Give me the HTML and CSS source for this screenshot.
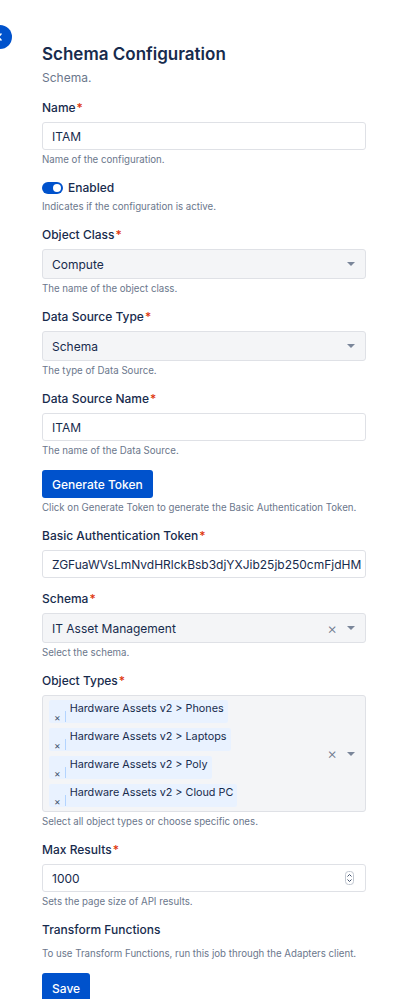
FILE: index.html
```html
<!DOCTYPE html>
<html lang="en">
<head>
  <meta charset="UTF-8">
  <title>Schema Configuration</title>
  <link rel="stylesheet" href="styles.css">
</head>
<body>

  <!-- sidebar collapse handle -->
  <button class="nav-toggle" aria-label="Collapse sidebar">
    <svg width="10" height="10" viewBox="0 0 10 10"><path d="M6 2 3 5l3 3" fill="none" stroke="#fff" stroke-width="1.6" stroke-linecap="round" stroke-linejoin="round"/></svg>
  </button>

  <form class="config">
    <div class="heading">
      <h1 class="title">Schema Configuration</h1>
      <p class="subtitle">Schema.</p>
    </div>

    <div class="field">
      <label>Name<span class="req">*</span></label>
      <div class="textbox">ITAM</div>
      <p class="help">Name of the configuration.</p>
    </div>

    <div class="field">
      <div class="toggle-row">
        <span class="toggle"><span class="knob"></span></span>
        <span class="toggle-label">Enabled</span>
      </div>
      <p class="help">Indicates if the configuration is active.</p>
    </div>

    <div class="field">
      <label>Object Class<span class="req">*</span></label>
      <div class="select">
        <span class="value">Compute</span>
        <span class="caret"></span>
      </div>
      <p class="help">The name of the object class.</p>
    </div>

    <div class="field">
      <label>Data Source Type<span class="req">*</span></label>
      <div class="select">
        <span class="value">Schema</span>
        <span class="caret"></span>
      </div>
      <p class="help">The type of Data Source.</p>
    </div>

    <div class="field">
      <label>Data Source Name<span class="req">*</span></label>
      <div class="textbox">ITAM</div>
      <p class="help">The name of the Data Source.</p>
    </div>

    <div class="field spaced">
      <button type="button" class="btn">Generate Token</button>
      <p class="help">Click on Generate Token to generate the Basic Authentication Token.</p>
    </div>

    <div class="field">
      <label>Basic Authentication Token<span class="req">*</span></label>
      <div class="textbox">ZGFuaWVsLmNvdHRlckBsb3djYXJib25jb250cmFjdHM</div>
    </div>

    <div class="field">
      <label>Schema<span class="req">*</span></label>
      <div class="select">
        <span class="value">IT Asset Management</span>
        <span class="clear">&times;</span>
        <span class="caret"></span>
      </div>
      <p class="help">Select the schema.</p>
    </div>

    <div class="field">
      <label>Object Types<span class="req">*</span></label>
      <div class="select multi">
        <div class="chips">
          <span class="chip"><span class="chip-x">&times;</span><span class="chip-text">Hardware Assets v2 &gt; Phones</span></span>
          <span class="chip"><span class="chip-x">&times;</span><span class="chip-text">Hardware Assets v2 &gt; Laptops</span></span>
          <span class="chip"><span class="chip-x">&times;</span><span class="chip-text">Hardware Assets v2 &gt; Poly</span></span>
          <span class="chip"><span class="chip-x">&times;</span><span class="chip-text">Hardware Assets v2 &gt; Cloud PC</span></span>
        </div>
        <span class="clear">&times;</span>
        <span class="caret"></span>
      </div>
      <p class="help">Select all object types or choose specific ones.</p>
    </div>

    <div class="field">
      <label>Max Results<span class="req">*</span></label>
      <div class="textbox">
        <span class="value">1000</span>
        <svg class="spinner" width="9" height="14" viewBox="0 0 9 14">
          <rect x="0.5" y="0.5" width="8" height="13" rx="3" fill="#fff" stroke="#c1c7d0"/>
          <path d="M2.5 5.5 4.5 3.5l2 2M2.5 8.5l2 2 2-2" fill="none" stroke="#42526e" stroke-width="1"/>
        </svg>
      </div>
      <p class="help">Sets the page size of API results.</p>
    </div>

    <div class="field">
      <h2 class="section">Transform Functions</h2>
      <p class="help note">To use Transform Functions, run this job through the Adapters client.</p>
    </div>

    <div class="field spaced">
      <button type="button" class="btn save">Save</button>
    </div>
  </form>

</body>
</html>
```

FILE: styles.css
```css
* {
  margin: 0;
  padding: 0;
  box-sizing: border-box;
}

body {
  background: #fff;
  color: #172b4d;
  font-family: Inter, "Noto Sans", sans-serif;
  position: relative;
  overflow: hidden;
}

.nav-toggle {
  position: absolute;
  left: -12px;
  top: 25px;
  width: 24px;
  height: 24px;
  border: none;
  border-radius: 50%;
  background: #0052cc;
  display: flex;
  align-items: center;
  justify-content: center;
}

.config {
  width: 324px;
  margin-left: 42px;
  padding-top: 42px;
  display: flex;
  flex-direction: column;
  gap: 11px;
}

.title {
  font-size: 17px;
  font-weight: 600;
  line-height: 24px;
}

.subtitle {
  margin-top: 3px;
  font-size: 12px;
  line-height: 18px;
  color: #6b778c;
}

.field label {
  display: block;
  font-size: 12px;
  font-weight: 500;
  line-height: 20px;
  margin-bottom: 4px;
}

.req {
  color: #de350b;
  margin-left: 1px;
}

.textbox,
.select {
  display: flex;
  align-items: center;
  border: 1px solid #dfe1e6;
  border-radius: 3px;
  padding: 0 9px;
  font-size: 12px;
  white-space: nowrap;
  overflow: hidden;
}

.textbox {
  height: 28px;
  background: #fff;
}

.select {
  height: 30px;
  background: #f4f5f7;
}

.select .value,
.textbox .value {
  flex: 1;
}

.clear {
  color: #6b778c;
  font-size: 15px;
  font-weight: 300;
  margin-right: 10px;
}

.caret {
  width: 0;
  height: 0;
  border-left: 4px solid transparent;
  border-right: 4px solid transparent;
  border-top: 4px solid #7a869a;
  margin-right: 1px;
}

.spinner {
  margin-right: 2px;
}

.help {
  margin-top: 3px;
  font-size: 9.7px;
  line-height: 14px;
  color: #6b778c;
  white-space: nowrap;
}

.toggle-row {
  height: 19px;
  display: flex;
  align-items: center;
  gap: 5px;
}

.toggle {
  width: 21px;
  height: 12px;
  border-radius: 6px;
  background: #0052cc;
  display: flex;
  align-items: center;
  justify-content: flex-end;
  padding-right: 2px;
}

.knob {
  width: 8px;
  height: 8px;
  border-radius: 50%;
  background: #fff;
}

.toggle-label {
  font-size: 12px;
  font-weight: 500;
}

.field.spaced {
  margin-top: 1px;
}

.btn {
  height: 28px;
  padding: 0 10px;
  border: none;
  border-radius: 3px;
  background: #0052cc;
  color: #fff;
  font-family: inherit;
  font-size: 12px;
  font-weight: 500;
}

.save {
  height: 30px;
}

/* multi select */
.select.multi {
  height: auto;
  padding: 4px 9px 4px 6px;
}

.chips {
  flex: 1;
  display: flex;
  flex-direction: column;
  align-items: flex-start;
  gap: 5px;
}

.chip {
  height: 23px;
  display: flex;
  background: #e9f2ff;
  border-radius: 2px;
  padding: 0 4px 0 5px;
}

.chip-x {
  align-self: flex-end;
  height: 11px;
  margin-bottom: 1px;
  padding-right: 4px;
  border-right: 1px solid #b3d4ff;
  font-size: 10px;
  line-height: 12px;
  color: #42526e;
}

.chip-text {
  padding-left: 4px;
  font-size: 10.8px;
  line-height: 17px;
}

.section {
  font-size: 12px;
  font-weight: 500;
  line-height: 20px;
}

.help.note {
  margin-top: 7px;
}
```
